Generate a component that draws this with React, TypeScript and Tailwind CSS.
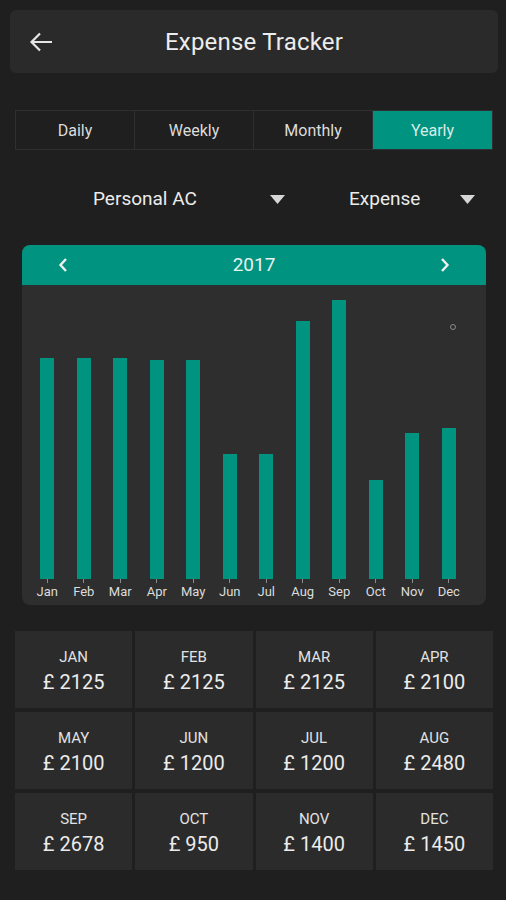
import React from "react";

const months = [
  { short: "Jan", label: "JAN", amount: 2125 },
  { short: "Feb", label: "FEB", amount: 2125 },
  { short: "Mar", label: "MAR", amount: 2125 },
  { short: "Apr", label: "APR", amount: 2100 },
  { short: "May", label: "MAY", amount: 2100 },
  { short: "Jun", label: "JUN", amount: 1200 },
  { short: "Jul", label: "JUL", amount: 1200 },
  { short: "Aug", label: "AUG", amount: 2480 },
  { short: "Sep", label: "SEP", amount: 2678 },
  { short: "Oct", label: "OCT", amount: 950 },
  { short: "Nov", label: "NOV", amount: 1400 },
  { short: "Dec", label: "DEC", amount: 1450 },
];

const tabs = ["Daily", "Weekly", "Monthly", "Yearly"];

const Caret = () => (
  <svg width="15" height="9" viewBox="0 0 15 9">
    <path d="M0 0 L15 0 L7.5 9 Z" fill="#d6d6d6" />
  </svg>
);

const App = () => {
  return (
    <div
      className="min-h-screen w-[506px] bg-[#1f1f1f] text-[#ececec] pt-[10px]"
      style={{ fontFamily: "Roboto, 'Noto Sans', sans-serif" }}
    >
      {/* Toolbar */}
      <div className="ml-[10px] mr-[8px] h-[63px] rounded-[6px] bg-[#2a2a2a] flex items-center relative">
        <svg className="absolute left-[18px]" width="26" height="24" viewBox="0 0 26 24">
          <path d="M24 12H4M12 3.5L3.5 12L12 20.5" stroke="#e6e6e6" strokeWidth="2.2" fill="none" />
        </svg>
        <div className="w-full text-center text-[24px] tracking-[0.2px]">Expense Tracker</div>
      </div>

      {/* Tabs */}
      <div className="ml-[15px] mr-[13px] mt-[37px] h-[40px] grid grid-cols-4 border border-[#2f2f2f]">
        {tabs.map((t, i) => (
          <div
            key={t}
            className={
              i === 3
                ? "flex items-center justify-center pt-[2px] bg-[#00937f] text-[16px] text-[#d8ece8]"
                : "flex items-center justify-center pt-[2px] border-r border-[#2f2f2f] text-[16px] text-[#dcdcdc]"
            }
          >
            {t}
          </div>
        ))}
      </div>

      {/* Dropdowns */}
      <div className="mt-[36px] h-[26px] flex items-center pl-[93px]">
        <div className="w-[192px] flex items-center justify-between">
          <span className="text-[19px]">Personal AC</span>
          <Caret />
        </div>
        <div className="ml-[64px] w-[126px] flex items-center justify-between">
          <span className="text-[19px]">Expense</span>
          <Caret />
        </div>
      </div>

      {/* Chart card */}
      <div className="mx-[22px] mt-[33px] w-[464px] rounded-[8px] overflow-hidden bg-[#2e2e2e]">
        <div className="h-[40px] bg-[#00937f] flex items-center justify-between px-[36px]">
          <svg width="10" height="16" viewBox="0 0 10 16">
            <path d="M8 2L2.5 8L8 14" stroke="#f0f0f0" strokeWidth="2.4" fill="none" />
          </svg>
          <span className="text-[19px] text-[#e6f2f0]">2017</span>
          <svg width="10" height="16" viewBox="0 0 10 16">
            <path d="M2 2L7.5 8L2 14" stroke="#f0f0f0" strokeWidth="2.4" fill="none" />
          </svg>
        </div>
        <div className="relative h-[320px] flex items-end pl-[7px] pr-[19px] pb-[4px]">
          <div className="absolute left-[428px] top-[39px] w-[6px] h-[6px] rounded-full border border-[#8a8a8a]" />
          {months.map((m) => (
            <div key={m.short} className="w-[36.5px] flex flex-col items-center">
              <div className="w-[14px] bg-[#00937f]" style={{ height: Math.round(m.amount * 0.1042) }} />
              <div className="w-px h-[4px] bg-[#8a8a8a]" />
              <div className="text-[13px] leading-[18px] text-[#dcdcdc]">{m.short}</div>
            </div>
          ))}
        </div>
      </div>

      {/* Monthly totals */}
      <div className="ml-[15px] mr-[13px] mt-[26px] grid grid-cols-4 gap-x-[3px] gap-y-[4px]">
        {months.map((m) => (
          <div key={m.label} className="h-[77px] pt-[5px] bg-[#2b2b2b] flex flex-col items-center justify-center">
            <div className="text-[15px] leading-[20px] text-[#e2e2e2]">{m.label}</div>
            <div className="text-[20px] leading-[30px] text-[#ececec]">£ {m.amount}</div>
          </div>
        ))}
      </div>
    </div>
  );
};

export default App;
